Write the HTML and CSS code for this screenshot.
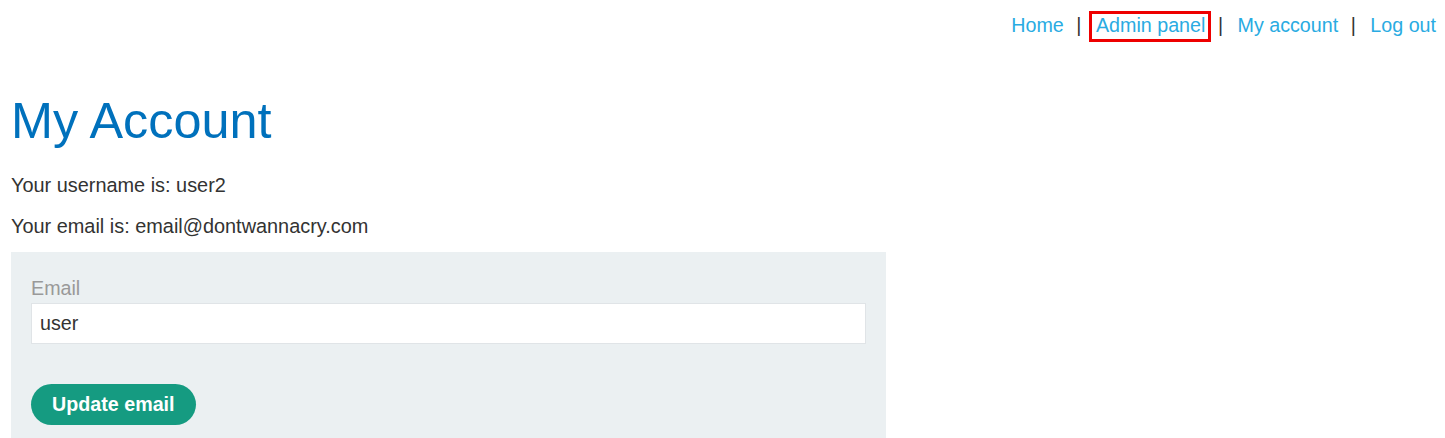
FILE: index.html
```html
<!DOCTYPE html>
<html lang="en">
<head>
<meta charset="utf-8">
<title>My Account</title>
<link rel="stylesheet" href="styles.css">
</head>
<body>
<header class="top-links">
  <a class="nav-link" href="#">Home</a><span class="sep">|</span>
  <a class="nav-link boxed" href="#">Admin panel</a><span class="sep">|</span>
  <a class="nav-link" href="#">My account</a><span class="sep">|</span>
  <a class="nav-link" href="#">Log out</a>
</header>
<main class="content">
  <h1 class="title">My Account</h1>
  <p class="info">Your username is: user2</p>
  <p class="info last">Your email is: email@dontwannacry.com</p>
  <form class="panel">
    <label class="field-label" for="email">Email</label>
    <input class="field-input" id="email" type="email" value="user">
    <button class="btn" type="button">Update email</button>
  </form>
</main>
</body>
</html>
```

FILE: styles.css
```css
html, body {
  margin: 0;
  padding: 0;
  background: #ffffff;
}
body {
  font-family: "Liberation Sans", Arial, sans-serif;
  color: #333332;
}
.top-links {
  display: flex;
  justify-content: flex-end;
  align-items: baseline;
  padding: 14px 9px 0 0;
  font-size: 19.7px;
  line-height: normal;
}
.nav-link {
  color: #29abe2;
  text-decoration: none;
}
.boxed {
  position: relative;
}
.boxed::after {
  content: "";
  position: absolute;
  left: -7px;
  right: -6px;
  top: -3px;
  bottom: -5px;
  border: 3px solid #ee0000;
  pointer-events: none;
}
.sep {
  color: #333332;
  margin: 0 14.5px 0 12.5px;
}
.content {
  padding: 0 11px;
}
.title {
  margin: 54px 0 24px;
  font-size: 50.4px;
  font-weight: normal;
  line-height: normal;
  color: #0071bc;
}
.info {
  margin: 0 0 18px;
  font-size: 19.9px;
  line-height: normal;
}
.info.last {
  margin-bottom: 13.5px;
}
.panel {
  width: 835px;
  padding: 25px 20px 20px;
  background: #ebf0f2;
}
.field-label {
  display: block;
  font-size: 19.7px;
  line-height: normal;
  color: #999999;
  margin-bottom: 3px;
}
.field-input {
  display: block;
  box-sizing: border-box;
  width: 100%;
  height: 41px;
  margin: 0;
  padding: 0 8px;
  border: 1px solid #e0e4e7;
  background: #ffffff;
  font-family: "Liberation Sans", Arial, sans-serif;
  font-size: 19.7px;
  color: #333332;
}
.btn {
  display: block;
  margin-top: 40px;
  height: 41px;
  padding: 0 21px;
  border: 0;
  border-radius: 21px;
  background: #159b81;
  color: #ffffff;
  font-family: "Liberation Sans", Arial, sans-serif;
  font-size: 19.7px;
  font-weight: bold;
}
```
